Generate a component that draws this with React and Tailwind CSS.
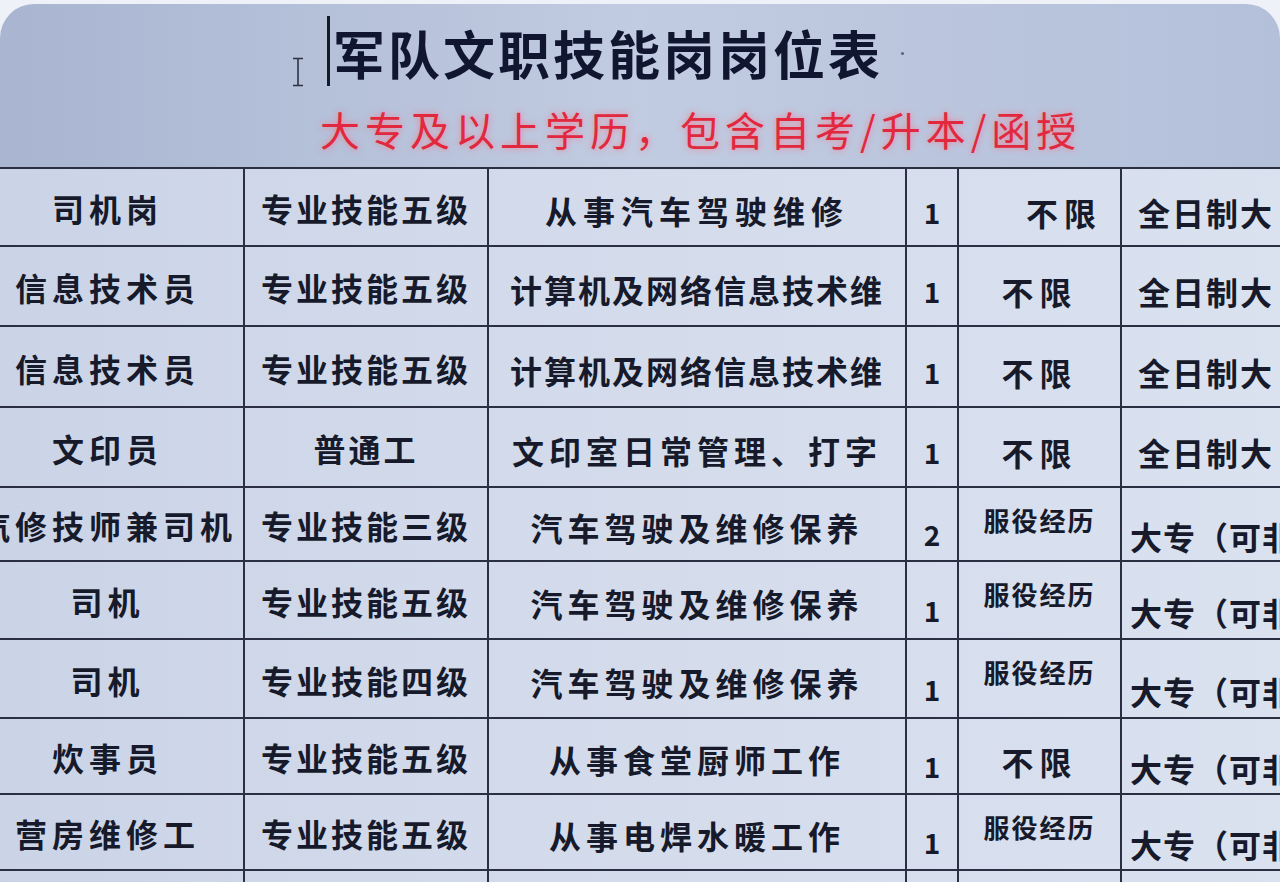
import React from 'react'

const rows = [
  { h: 78, a: '司机岗', b: '专业技能五级', c: '从事汽车驾驶维修', cs: 'tracking-[6px]', n: '1', e: '不限', eRight: true, f: '全日制大', full: true },
  { h: 80, a: '信息技术员', b: '专业技能五级', c: '计算机及网络信息技术维', cs: 'tracking-[2px]', n: '1', e: '不限', f: '全日制大', full: true },
  { h: 81, a: '信息技术员', b: '专业技能五级', c: '计算机及网络信息技术维', cs: 'tracking-[2px]', n: '1', e: '不限', f: '全日制大', full: true },
  { h: 80, a: '文印员', b: '普通工', c: '文印室日常管理、打字', cs: 'tracking-[5px]', n: '1', e: '不限', f: '全日制大', full: true },
  { h: 74, a: '汽修技师兼司机', b: '专业技能三级', c: '汽车驾驶及维修保养', cs: 'tracking-[5px]', n: '2', e: '服役经历', f: '大专（可非' },
  { h: 78, a: '司机', b: '专业技能五级', c: '汽车驾驶及维修保养', cs: 'tracking-[5px]', n: '1', e: '服役经历', f: '大专（可非' },
  { h: 79, a: '司机', b: '专业技能四级', c: '汽车驾驶及维修保养', cs: 'tracking-[5px]', n: '1', e: '服役经历', f: '大专（可非' },
  { h: 76, a: '炊事员', b: '专业技能五级', c: '从事食堂厨师工作', cs: 'tracking-[5px]', n: '1', e: '不限', f: '大专（可非' },
  { h: 76, a: '营房维修工', b: '专业技能五级', c: '从事电焊水暖工作', cs: 'tracking-[5px]', n: '1', e: '服役经历', f: '大专（可非' },
]

const td = 'border-2 border-[#2a3042] p-0 align-top'

function Row({ r }) {
  const rowH = { height: r.h - 2 }
  return (
    <tr style={rowH}>
      <td className="border-2 border-l-0 border-[#2a3042] p-0 align-top">
        <div className="flex items-center justify-center overflow-hidden whitespace-nowrap pr-[28px] pt-[2px] text-[32px] font-bold tracking-[5px]" style={rowH}>
          {r.a}
        </div>
      </td>
      <td className={td}>
        <div className="flex items-center justify-center overflow-hidden whitespace-nowrap pt-[2px] text-[32px] font-bold tracking-[3px]" style={rowH}>
          {r.b}
        </div>
      </td>
      <td className={td}>
        <div className={`flex items-center justify-center overflow-hidden whitespace-nowrap pt-[6px] text-[32px] font-bold ${r.cs}`} style={rowH}>
          {r.c}
        </div>
      </td>
      <td className={td}>
        <div className={`flex items-center justify-center ${r.full ? 'pt-[10px]' : 'pt-[20px]'} text-[28px] font-bold`} style={rowH}>
          {r.n}
        </div>
      </td>
      <td className={td}>
        {r.e === '服役经历' ? (
          <div className="flex justify-center whitespace-nowrap pt-[12px] text-[26px] font-bold tracking-[2px]" style={rowH}>
            {r.e}
          </div>
        ) : (
          <div
            className={`flex items-center whitespace-nowrap pt-[10px] text-[32px] font-bold tracking-[6px] ${r.eRight ? 'justify-end pr-[18px]' : 'justify-center'}`}
            style={rowH}
          >
            {r.e}
          </div>
        )}
      </td>
      <td className="border-2 border-r-0 border-[#2a3042] p-0 align-top">
        <div
          className={`flex items-center overflow-hidden whitespace-nowrap text-[32px] font-bold ${r.full ? 'pl-[16px] pt-[10px] tracking-[2px]' : 'pl-[8px] pt-[24px] tracking-[1px]'}`}
          style={rowH}
        >
          {r.f}
        </div>
      </td>
    </tr>
  )
}

export default function App() {
  return (
    <div className="h-[882px] w-[1280px] overflow-hidden bg-[#eef1f7] font-['Noto_Sans_CJK_SC','Noto_Sans',sans-serif] text-[#161a2b]">
      <div className="mt-[4px] h-[878px] overflow-hidden rounded-t-[34px] bg-gradient-to-r from-[#a9b5d1] via-[#c1cbe1] to-[#b4c0da]">
        <div className="h-[163px]">
          <div className="flex items-start pl-[291px] pt-[12px]">
            <svg width="14" height="30" viewBox="0 0 14 30" className="mt-[41px]">
              <path d="M2 1.5h10M7 1.5v27M2 28.5h10" stroke="#2d3342" strokeWidth="1.6" fill="none" />
            </svg>
            <div className="ml-[22px] h-[70px] w-[3px] bg-[#141a2c]" />
            <div className="ml-[3px] mt-[11px] whitespace-nowrap text-[52px] font-bold leading-none tracking-[3px] text-[#101630]">
              军队文职技能岗岗位表
            </div>
            <div className="ml-[18px] mt-[36px] h-[3px] w-[3px] rounded-full bg-[#5a6278]" />
          </div>
          <div className="mt-[22px] whitespace-nowrap pl-[320px] text-[40px] leading-none tracking-[5px] text-[#e1283e] [text-shadow:0_0_6px_rgba(255,110,130,0.75)]">
            大专及以上学历，包含自考/升本/函授
          </div>
        </div>
        <table className="w-[1284px] table-fixed border-collapse bg-gradient-to-r from-[#cbd4e7] via-[#d4dcec] to-[#dae1ef]">
          <colgroup>
            <col className="w-[244px]" />
            <col className="w-[244px]" />
            <col className="w-[418px]" />
            <col className="w-[52px]" />
            <col className="w-[163px]" />
            <col className="w-[163px]" />
          </colgroup>
          <tbody>
            {rows.map((r, i) => (
              <Row key={i} r={r} />
            ))}
            <tr className="h-[40px]">
              <td className="border-2 border-l-0 border-[#2a3042]" />
              <td className="border-2 border-[#2a3042]" />
              <td className="border-2 border-[#2a3042]" />
              <td className="border-2 border-[#2a3042]" />
              <td className="border-2 border-[#2a3042]" />
              <td className="border-2 border-r-0 border-[#2a3042]" />
            </tr>
          </tbody>
        </table>
      </div>
    </div>
  )
}
